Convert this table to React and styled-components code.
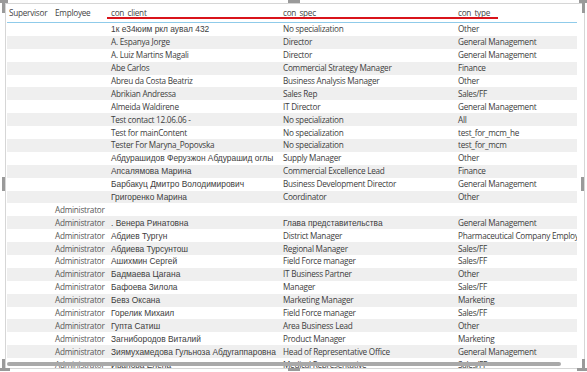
import React from 'react';
import styled, { createGlobalStyle } from 'styled-components';

const GlobalStyle = createGlobalStyle`
  html, body {
    margin: 0;
    padding: 0;
    background: #ffffff;
  }
`;

const columns = [
  { key: 'supervisor', title: 'Supervisor', width: 46 },
  { key: 'employee', title: 'Employee', width: 56 },
  { key: 'client', title: 'con_client', width: 172 },
  { key: 'spec', title: 'con_spec', width: 175 },
  { key: 'type', title: 'con_type', width: 120 },
];

const rows = [
  ['', '', '1к е34юим ркл аувал 432', 'No specialization', 'Other'],
  ['', '', 'A. Espanya Jorge', 'Director', 'General Management'],
  ['', '', 'A. Luiz Martins Magali', 'Director', 'General Management'],
  ['', '', 'Abe Carlos', 'Commercial Strategy Manager', 'Finance'],
  ['', '', 'Abreu da Costa Beatriz', 'Business Analysis Manager', 'Other'],
  ['', '', 'Abrikian Andressa', 'Sales Rep', 'Sales/FF'],
  ['', '', 'Almeida Waldirene', 'IT Director', 'General Management'],
  ['', '', 'Test contact 12.06.06 -', 'No specialization', 'All'],
  ['', '', 'Test for mainContent', 'No specialization', 'test_for_mcm_he'],
  ['', '', 'Tester For Maryna_Popovska', 'No specialization', 'test_for_mcm'],
  ['', '', 'Абдурашидов Ферузжон Абдурашид оглы', 'Supply Manager', 'Other'],
  ['', '', 'Апсалямова Марина', 'Commercial Excellence Lead', 'Finance'],
  ['', '', 'Барбакуц Дмитро Володимирович', 'Business Development Director', 'General Management'],
  ['', '', 'Григоренко Марина', 'Coordinator', 'Other'],
  ['', 'Administrator', '', '', ''],
  ['', 'Administrator', '. Венера Ринатовна', 'Глава представительства', 'General Management'],
  ['', 'Administrator', 'Абдиев Тургун', 'District Manager', 'Pharmaceutical Company Employ'],
  ['', 'Administrator', 'Абдиева Турсунтош', 'Regional Manager', 'Sales/FF'],
  ['', 'Administrator', 'Ашихмин Сергей', 'Field Force manager', 'Sales/FF'],
  ['', 'Administrator', 'Бадмаева Цагана', 'IT Business Partner', 'Other'],
  ['', 'Administrator', 'Бафоева Зилола', 'Manager', 'Sales/FF'],
  ['', 'Administrator', 'Бевз Оксана', 'Marketing Manager', 'Marketing'],
  ['', 'Administrator', 'Горелик Михаил', 'Field Force manager', 'Sales/FF'],
  ['', 'Administrator', 'Гупта Сатиш', 'Area Business Lead', 'Other'],
  ['', 'Administrator', 'Загнибородов Виталий', 'Product Manager', 'Marketing'],
  ['', 'Administrator', 'Зиямухамедова Гульноза Абдугаппаровна', 'Head of Representative Office', 'General Management'],
  ['', 'Administrator', 'Иванова Елена', 'Medical Representative', 'Sales/FF'],
];

const isCyrillic = (text) => /[\u0400-\u04FF]/.test(text);

const Page = styled.div`
  position: relative;
  width: 587px;
  height: 372px;
  overflow: hidden;
`;

const Frame = styled.div`
  position: relative;
  box-sizing: border-box;
  margin: 3px 3px 0 5px;
  width: 580px;
  height: 366px;
  border: 1px solid #d6d6d6;
  overflow: hidden;
  background: #ffffff;
`;

const Table = styled.div`
  margin: 0 7px 0 1px;
  color: #3d3d3d;
`;

const Grid = styled.div`
  display: grid;
  grid-template-columns: ${({ $cols }) => $cols};
  align-items: center;
`;

const HeaderRow = styled(Grid)`
  height: 18px;
  border-bottom: 1px solid #8fcbea;
  color: #444444;
`;

const Row = styled(Grid)`
  height: 12.9px;
  background: ${({ $striped }) => ($striped ? '#efefef' : '#ffffff')};
`;

const Cell = styled.div`
  padding-left: 2px;
  white-space: nowrap;
  overflow: hidden;
  line-height: 12px;
  font-family: ${({ $cyr }) =>
    $cyr ? "'Liberation Sans', Arial, sans-serif" : "'Open Sans', 'Liberation Sans', sans-serif"};
  font-size: ${({ $cyr }) => ($cyr ? '8.4px' : '8.2px')};
  letter-spacing: ${({ $cyr }) => ($cyr ? '0' : '-0.25px')};
  color: ${({ $muted }) => ($muted ? '#575757' : 'inherit')};
`;

const SortMark = styled.div`
  position: absolute;
  top: 13px;
  left: 101px;
  width: 391px;
  height: 2px;
  background: #d9141b;
`;

const HScroll = styled.div`
  position: absolute;
  left: 1px;
  bottom: 2px;
  width: 554px;
  height: 4px;
  border-radius: 2px;
  background: #a9a9a9;
`;

const Handle = styled.div`
  position: absolute;
  background: #9a9a9a;
  ${({ $pos }) => $pos}
`;

const Corner = styled.div`
  position: absolute;
  width: 10px;
  height: 13px;
  &::before, &::after {
    content: '';
    position: absolute;
    background: #9a9a9a;
  }
`;

const TopLeft = styled(Corner)`
  top: 0;
  left: 0;
  &::before { top: 0; left: 0; width: 8px; height: 3px; }
  &::after { top: 0; left: 2px; width: 3px; height: 13px; }
`;

const TopRight = styled(Corner)`
  top: 0;
  right: 0;
  &::before { top: 0; right: 0; width: 8px; height: 3px; }
  &::after { top: 0; right: 2px; width: 3px; height: 13px; }
`;

const BottomLeft = styled(Corner)`
  bottom: 0;
  left: 0;
  &::before { bottom: 1px; left: 0; width: 10px; height: 3px; }
  &::after { bottom: 1px; left: 2px; width: 3px; height: 12px; }
`;

const BottomRight = styled(Corner)`
  bottom: 0;
  right: 0;
  &::before { bottom: 1px; right: 0; width: 10px; height: 3px; }
  &::after { bottom: 1px; right: 2px; width: 3px; height: 12px; }
`;

export default function App() {
  const cols = columns.map((c, i) => (i === columns.length - 1 ? '1fr' : `${c.width}px`)).join(' ');
  return (
    <Page>
      <GlobalStyle />
      <Frame>
        <Table>
          <HeaderRow $cols={cols}>
            {columns.map((c) => (
              <Cell key={c.key}>{c.title}</Cell>
            ))}
          </HeaderRow>
          {rows.map((r, i) => (
            <Row key={i} $cols={cols} $striped={i % 2 === 1}>
              {r.map((v, j) => (
                <Cell key={j} $cyr={isCyrillic(v)} $muted={j === 1}>
                  {v}
                </Cell>
              ))}
            </Row>
          ))}
        </Table>
        <SortMark />
        <HScroll />
      </Frame>
      <TopLeft />
      <TopRight />
      <BottomLeft />
      <BottomRight />
      <Handle $pos="left: 2px; top: 177px; width: 3px; height: 14px;" />
      <Handle $pos="right: 3px; top: 177px; width: 3px; height: 14px;" />
      <Handle $pos="left: 288px; bottom: 1px; width: 12px; height: 3px;" />
      <Handle $pos="left: 288px; top: 0; width: 12px; height: 3px;" />
    </Page>
  );
}
